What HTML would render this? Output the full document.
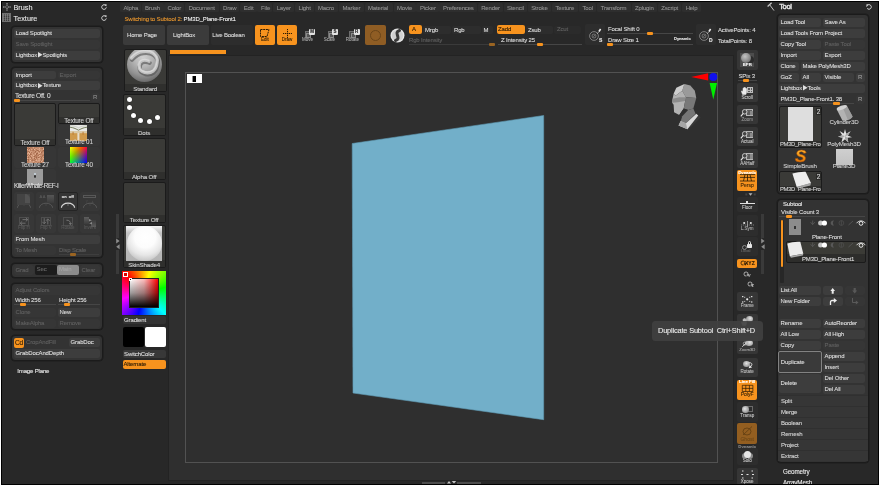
<!DOCTYPE html>
<html><head><meta charset="utf-8"><title>ZBrush</title>
<style>
html,body{margin:0;padding:0;background:#fff;}
body{width:880px;height:486px;overflow:hidden;position:relative;font-family:"Liberation Sans",sans-serif;font-size:6px;letter-spacing:-0.15px;color:#d2d2d2;-webkit-text-stroke:0.1px;}
div{position:absolute;box-sizing:border-box;white-space:nowrap;}
svg{position:absolute;overflow:visible;}
#fr1{left:0;top:0;width:880px;height:486px;border:1px solid #fff;}
#fr2{left:1px;top:1px;width:878px;height:484px;border:1px solid #000;}
#root{left:0;top:0;width:880px;height:486px;overflow:hidden;}
#ui{left:0;top:0;width:880px;height:486px;will-change:transform;}
#app{left:2px;top:2px;width:876px;height:482px;background:#282828;}
.p{background:#333;border:1px solid #1b1b1b;border-radius:4px;box-shadow:0 0 0 0.6px #1d1d1d;}
.b{background:#3d3d3d;border-radius:2px;padding-left:1.6px;color:#dedede;}
.d{background:#363636;border-radius:2px;padding-left:1.6px;color:#606060;}
.o{background:#f7931e;border-radius:2px;padding-left:1px;color:#2a1a05;}
.t{color:#dedede;}
.g{color:#606060;}
.h{font-size:7.3px;color:#e6e6e6;letter-spacing:0;}
.trk{background:#464646;}
.kn{background:#f7931e;border-radius:1px;}
.kd{background:#9a6422;}
.th{background:#3a3a37;border:1px solid #1b1b1b;border-radius:2px;}
.lb{text-align:center;color:#d0d0d0;}
.m{background:#2e2e2e;border-radius:1.5px;}
.ib{background:#363636;border-radius:2px;}
.ik{background:#2d2d2d;border-radius:2px;}
.tri{position:static;display:inline-block;vertical-align:-0.6px;margin:0 0.2px 0 0.5px;}
.s{font-size:4.5px;text-align:center;letter-spacing:0;}
</style></head>
<body>
<div id="root">
<div id="app"></div>
<div id="ui">
<div class="h" style="left:13.5px;top:1.5px;line-height:11px;">Brush</div>
<div class="h" style="left:13.5px;top:12.7px;line-height:11px;">Texture</div>
<svg style="left:3.4px;top:2.5px" width="8" height="8" viewBox="0 0 8 8"><path d="M4 0v3M4 5v3M0 4h3M5 4h3" stroke="#c4c4c4" stroke-width="0.9" stroke-dasharray="1.6 0.6" fill="none"/><circle cx="4" cy="4" r="0.5" fill="#c4c4c4"/></svg>
<div class="" style="left:2.4px;top:13px;width:8.6px;height:9.2px;background:#565656;background-image:repeating-linear-gradient(90deg,rgba(150,150,150,0.55) 0 0.8px,transparent 0.8px 2px),repeating-linear-gradient(0deg,rgba(40,40,40,0.5) 0 0.8px,transparent 0.8px 2.2px);border:0.6px solid #707070;"></div>
<svg style="left:101px;top:4px" width="6" height="6" viewBox="0 0 6 6"><path d="M4.8 1.6A2.3 2.3 0 1 0 5.3 3.4" stroke="#d8d8d8" stroke-width="1" fill="none"/><path d="M3.6 0.2L5.8 0.4L5.2 2.6z" fill="#d8d8d8"/></svg>
<svg style="left:101px;top:15px" width="6" height="6" viewBox="0 0 6 6"><path d="M4.8 1.6A2.3 2.3 0 1 0 5.3 3.4" stroke="#d8d8d8" stroke-width="1" fill="none"/><path d="M3.6 0.2L5.8 0.4L5.2 2.6z" fill="#d8d8d8"/></svg>
<div class="p" style="left:11px;top:26px;width:92px;height:37px;"></div>
<div class="b" style="left:14px;top:29px;width:86px;height:9px;line-height:9px;">Load Spotlight</div>
<div class="d" style="left:14px;top:40px;width:86px;height:9px;line-height:9px;">Save Spotlight</div>
<div class="b" style="left:14px;top:51px;width:86px;height:9px;line-height:9px;">Lightbox<svg class="tri" width="4.6" height="5.4" viewBox="0 0 46 54"><path d="M0 0L46 27L0 54z" fill="#e0e0e0"/></svg>Spotlights</div>
<div class="p" style="left:11px;top:67px;width:92px;height:191px;"></div>
<div class="b" style="left:14px;top:70.5px;width:42px;height:8.8px;line-height:8.8px;">Import</div>
<div class="d" style="left:58px;top:70.5px;width:42px;height:8.8px;line-height:8.8px;">Export</div>
<div class="b" style="left:14px;top:81.4px;width:86px;height:8.6px;line-height:8.6px;">Lightbox<svg class="tri" width="4.6" height="5.4" viewBox="0 0 46 54"><path d="M0 0L46 27L0 54z" fill="#e0e0e0"/></svg>Texture</div>
<div class="t" style="left:15px;top:91.7px;line-height:8px;font-size:6.6px;letter-spacing:-0.3px;">Texture Off. 0</div>
<div class="trk" style="left:14px;top:100px;width:76px;height:1px;"></div>
<div class="kn" style="left:14px;top:99px;width:6px;height:3px;"></div>
<div class="ib" style="left:91px;top:93px;width:9px;height:9px;line-height:9px;color:#8a8a8a;padding-left:2px;">R</div>
<div class="th" style="left:13.7px;top:103px;width:42.5px;height:42.5px;"></div>
<div class="lb" style="left:14.7px;top:138.5px;width:40.5px;height:6px;line-height:7px;background:#30302e;font-size:6.3px;">Texture Off</div>
<div class="th" style="left:57.5px;top:103px;width:42.7px;height:20.7px;"></div>
<div class="lb" style="left:58.5px;top:116.5px;width:40.7px;height:6.2px;line-height:7px;background:#30302e;font-size:6.3px;">Texture Off</div>
<div class="" style="left:57.5px;top:124.5px;width:42.7px;height:21px;background:#363636;border-radius:2px;"></div>
<div class="" style="left:13.7px;top:146.5px;width:42.5px;height:21px;background:#363636;border-radius:2px;"></div>
<div class="" style="left:57.5px;top:146.5px;width:42.7px;height:21px;background:#363636;border-radius:2px;"></div>
<div class="" style="left:13.7px;top:168.5px;width:42.5px;height:21px;background:#363636;border-radius:2px;"></div>
<svg style="left:70.3px;top:124.8px" width="17" height="16" viewBox="0 0 17 16"><rect width="17" height="16" fill="#e9e9e6"/><rect y="7.5" width="17" height="8.5" fill="#cf9a4c"/><rect y="6" width="17" height="2.2" fill="#d9c9a8"/><path d="M0 2.2C4 2.6 6.5 4.2 8.5 5.2C10.5 4.2 13 2.6 17 2.2" stroke="#6a7450" stroke-width="0.9" fill="none"/><path d="M0 0.6C5 1 7 2 8.5 2.8C10 2 12 1 17 0.6" stroke="#b9bdb0" stroke-width="0.6" fill="none"/><rect x="7.4" y="8" width="2" height="7" fill="#e6dccb"/><rect x="2.6" y="6.8" width="0.9" height="3" fill="#b9772e"/><rect x="12.6" y="6.8" width="0.9" height="3" fill="#b9772e"/></svg>
<div class="lb" style="left:57.5px;top:138.2px;width:42.7px;line-height:7px;font-size:6.3px;">Texture 01</div>
<svg style="left:26.7px;top:146.9px" width="16.5" height="16" viewBox="0 0 33 32"><defs><filter id="nz" x="0" y="0" width="100%" height="100%" color-interpolation-filters="sRGB"><feTurbulence type="fractalNoise" baseFrequency="0.7" numOctaves="2" seed="4"/><feColorMatrix type="matrix" values="0.6 0 0 0 0.47  0.7 0 0 0 0.2  0.7 0 0 0 0.08  0 0 0 0 1"/></filter></defs><rect width="33" height="32" fill="#c39b80"/><rect width="33" height="32" filter="url(#nz)"/></svg>
<div class="lb" style="left:13.7px;top:160.5px;width:42.5px;line-height:7px;font-size:6.3px;">Texture 27</div>
<div class="" style="left:70.3px;top:146.9px;width:17px;height:16px;background:linear-gradient(to bottom right,#000 35%,#00f 100%),linear-gradient(to right,#0f0,#000),linear-gradient(to bottom,#f00,#000);background-blend-mode:screen,screen,normal;"></div>
<div class="lb" style="left:57.5px;top:160.5px;width:42.7px;line-height:7px;font-size:6.3px;">Texture 40</div>
<div class="" style="left:26.7px;top:169px;width:16.5px;height:16px;background:#9c9c9c;"></div>
<div class="" style="left:33.8px;top:174.5px;width:2.6px;height:3.6px;background:#2c2c2c;border-radius:50%;"></div>
<div class="" style="left:34.3px;top:173px;width:1.6px;height:1.6px;background:#c8d4dc;border-radius:50%;"></div>
<div class="t" style="left:14px;top:182.2px;line-height:7px;font-size:6.3px;letter-spacing:-0.35px;">KillerWhale-REF-I</div>
<div class="" style="left:14px;top:191.6px;width:19.7px;height:19.6px;background:#373737;border-radius:2px;"></div>
<div class="" style="left:14px;top:213.6px;width:19.7px;height:19.4px;background:#373737;border-radius:2px;"></div>
<div class="" style="left:36px;top:191.6px;width:19.9px;height:19.6px;background:#373737;border-radius:2px;"></div>
<div class="" style="left:36px;top:213.6px;width:19.9px;height:19.4px;background:#373737;border-radius:2px;"></div>
<div class="" style="left:57.8px;top:191.6px;width:20px;height:19.6px;background:#373737;border-radius:2px;border:1px solid #242424;background:#353535;"></div>
<div class="" style="left:57.8px;top:213.6px;width:20px;height:19.4px;background:#373737;border-radius:2px;"></div>
<div class="" style="left:80px;top:191.6px;width:20px;height:19.6px;background:#373737;border-radius:2px;"></div>
<div class="" style="left:80px;top:213.6px;width:20px;height:19.4px;background:#373737;border-radius:2px;"></div>
<svg style="left:17px;top:203px" width="14" height="5" viewBox="0 0 14 5"><path d="M0.4 4.8A6.6 4.6 0 0 1 13.6 4.8" stroke="#5a5a5a" stroke-width="0.9" fill="none"/><path d="M7 1.4V2.6" stroke="#5a5a5a" stroke-width="0.6"/></svg>
<svg style="left:39px;top:203px" width="14" height="5" viewBox="0 0 14 5"><path d="M0.4 4.8A6.6 4.6 0 0 1 13.6 4.8" stroke="#5a5a5a" stroke-width="0.9" fill="none"/><path d="M7 1.4V2.6" stroke="#5a5a5a" stroke-width="0.6"/></svg>
<svg style="left:60.8px;top:203px" width="14" height="5" viewBox="0 0 14 5"><path d="M0.4 4.8A6.6 4.6 0 0 1 13.6 4.8" stroke="#d8d8d8" stroke-width="1.2" fill="none"/><path d="M7 1.4V2.6" stroke="#d8d8d8" stroke-width="0.6"/></svg>
<svg style="left:83px;top:203px" width="14" height="5" viewBox="0 0 14 5"><path d="M0.4 4.8A6.6 4.6 0 0 1 13.6 4.8" stroke="#5a5a5a" stroke-width="0.9" fill="none"/><path d="M7 1.4V2.6" stroke="#5a5a5a" stroke-width="0.6"/></svg>
<div class="" style="left:17px;top:194.4px;width:13.3px;height:11px;background:#434343;"></div>
<div class="" style="left:24.5px;top:194.4px;width:5.8px;height:9px;background:#525252;border-radius:0 6px 0 0;"></div>
<div class="" style="left:47px;top:195px;width:7px;height:8px;background:linear-gradient(to bottom,#565656,#3c3c3c);"></div>
<div class="s" style="left:39.5px;top:194px;color:#5a5a5a;font-size:4px;line-height:5px;">A A</div>
<div class="s" style="left:57.8px;top:193.6px;width:20px;color:#e4e4e4;font-weight:bold;font-size:4px;line-height:5px;">on&nbsp; off</div>
<div class="" style="left:83.2px;top:194.6px;width:12.8px;height:3px;border:0.7px solid #585858;"></div>
<div class="s" style="left:80px;top:198.5px;width:20px;color:#484848;font-size:4px;line-height:5px;">Y&nbsp;&nbsp;&#9650;</div>
<div class="" style="left:19px;top:217px;width:9.8px;height:9px;border:0.8px solid #4e4e4e;"></div>
<div class="s" style="left:14px;top:225px;width:19.7px;color:#585858;line-height:6px;">Flip H</div>
<div class="" style="left:41px;top:217px;width:9.8px;height:9px;border:0.8px solid #4e4e4e;"></div>
<div class="s" style="left:36px;top:225px;width:19.9px;color:#585858;line-height:6px;">Flip V</div>
<div class="" style="left:62.8px;top:217px;width:9.8px;height:9px;border:0.8px solid #4e4e4e;"></div>
<div class="s" style="left:57.8px;top:225px;width:20px;color:#585858;line-height:6px;">Rotate</div>
<div class="s" style="left:80px;top:225px;width:20px;color:#585858;line-height:6px;">Invers</div>
<svg style="left:19px;top:217px" width="10" height="9" viewBox="0 0 10 9"><path d="M3.5 2.6H8.6M6.8 0.8L8.8 2.6L6.8 4.4M6.5 6.2H1.4M3.2 4.4L1.2 6.2L3.2 8" stroke="#747474" stroke-width="0.9" fill="none"/></svg>
<svg style="left:41px;top:217px" width="10" height="9" viewBox="0 0 10 9"><path d="M3.2 1.2V6.6M1.4 4.8L3.2 6.8L5 4.8M6.8 7.4V2M5 3.8L6.8 1.8L8.6 3.8" stroke="#747474" stroke-width="0.9" fill="none"/></svg>
<svg style="left:62.8px;top:217px" width="10" height="9" viewBox="0 0 10 9"><path d="M3.4 3.2C6.2 3 7.6 4.6 7.4 7" stroke="#747474" stroke-width="1" fill="none"/><path d="M5.8 6L7.4 8.2L9 6z" fill="#747474"/></svg>
<div class="" style="left:84.3px;top:217.4px;width:4.6px;height:7px;background:linear-gradient(to bottom,#5e5e5e,#3c3c3c);"></div>
<div class="" style="left:91px;top:219.6px;width:4.6px;height:7px;background:linear-gradient(to bottom,#3c3c3c,#5e5e5e);"></div>
<svg style="left:88.6px;top:219.4px" width="3" height="5.6" viewBox="0 0 30 56"><path d="M0 0L28 12L0 24zM30 30L2 43L30 56z" fill="#8a8a8a"/></svg>
<div class="b" style="left:14px;top:235px;width:86px;height:9px;line-height:9px;">From Mesh</div>
<div class="d" style="left:14px;top:246px;width:42px;height:9px;line-height:9px;">To Mesh</div>
<div class="g" style="left:59px;top:246px;line-height:8px;">Disp Scale</div>
<div class="trk" style="left:59px;top:254px;width:40px;height:1px;background:#3e3e3e;"></div>
<div class="kn kd" style="left:70px;top:253px;width:6px;height:3px;"></div>
<div class="" style="left:116px;top:214px;width:3px;height:24px;background:#3a3a3a;"></div>
<div class="" style="left:116px;top:250px;width:3px;height:24px;background:#3a3a3a;"></div>
<svg style="left:116px;top:238px" width="4" height="12" viewBox="0 0 4 12"><path d="M0.2 0.5L3.6 3L0.2 5.5z" fill="#8c8c8c"/><path d="M3.6 6.3L0.2 8.8L3.6 11.3z" fill="#8c8c8c"/></svg>
<div class="p" style="left:11px;top:263px;width:92px;height:15px;"></div>
<div class="d" style="left:14px;top:265px;width:20px;height:10px;line-height:10px;">Grad</div>
<div class="d" style="left:35px;top:265px;width:22px;height:10px;line-height:10px;background:#1c1c1c;color:#666;line-height:8px;">Sec</div>
<div class="d" style="left:57px;top:265px;width:22px;height:10px;line-height:10px;background:#8c8c8c;color:#a4a4a4;line-height:8px;padding-left:2px;">Main</div>
<div class="d" style="left:80px;top:265px;width:20px;height:10px;line-height:10px;">Clear</div>
<div class="p" style="left:11px;top:283px;width:92px;height:47px;"></div>
<div class="d" style="left:14px;top:286px;width:86px;height:9px;line-height:9px;">Adjust Colors</div>
<div class="t" style="left:15px;top:296.3px;line-height:8px;">Width 256</div>
<div class="trk" style="left:14px;top:304.3px;width:42px;height:1px;"></div>
<div class="kn" style="left:20px;top:303.3px;width:6px;height:3px;"></div>
<div class="t" style="left:59px;top:296.3px;line-height:8px;">Height 256</div>
<div class="trk" style="left:58px;top:304.3px;width:42px;height:1px;"></div>
<div class="kn" style="left:64px;top:303.3px;width:6px;height:3px;"></div>
<div class="d" style="left:14px;top:308px;width:42px;height:9px;line-height:9px;">Clone</div>
<div class="b" style="left:58px;top:308px;width:42px;height:9px;line-height:9px;">New</div>
<div class="d" style="left:14px;top:319px;width:42px;height:9px;line-height:9px;">MakeAlpha</div>
<div class="d" style="left:58px;top:319px;width:42px;height:9px;line-height:9px;">Remove</div>
<div class="p" style="left:11px;top:335px;width:92px;height:26px;"></div>
<div class="o" style="left:14px;top:338px;width:9.5px;height:9.5px;line-height:9.5px;padding-left:1px;font-size:6.6px;letter-spacing:-0.3px;">Cd</div>
<div class="g" style="left:26px;top:338px;line-height:9px;">CropAndFill</div>
<div class="b" style="left:69px;top:338px;width:31px;height:9px;line-height:9px;">GrabDoc</div>
<div class="b" style="left:14px;top:349px;width:86px;height:9px;line-height:9px;">GrabDocAndDepth</div>
<div class="t" style="left:17.3px;top:366px;line-height:9px;color:#e8e8e8;font-size:6.1px;letter-spacing:-0.2px;">Image Plane</div>
<div class="m" style="left:120.3px;top:3.4px;width:20.8px;height:8.8px;"></div>
<div class="" style="left:123.5px;top:4.1px;line-height:8.8px;color:#909090;">Alpha</div>
<div class="m" style="left:141.9px;top:3.4px;width:21.7px;height:8.8px;"></div>
<div class="" style="left:145px;top:4.1px;line-height:8.8px;color:#909090;">Brush</div>
<div class="m" style="left:164.4px;top:3.4px;width:20.0px;height:8.8px;"></div>
<div class="" style="left:167.5px;top:4.1px;line-height:8.8px;color:#909090;">Color</div>
<div class="m" style="left:185.2px;top:3.4px;width:33.6px;height:8.8px;"></div>
<div class="" style="left:188.7px;top:4.1px;line-height:8.8px;color:#909090;">Document</div>
<div class="m" style="left:219.7px;top:3.4px;width:19.8px;height:8.8px;"></div>
<div class="" style="left:223px;top:4.1px;line-height:8.8px;color:#909090;">Draw</div>
<div class="m" style="left:240.2px;top:3.4px;width:16.4px;height:8.8px;"></div>
<div class="" style="left:243.7px;top:4.1px;line-height:8.8px;color:#909090;">Edit</div>
<div class="m" style="left:257.4px;top:3.4px;width:15.1px;height:8.8px;"></div>
<div class="" style="left:261px;top:4.1px;line-height:8.8px;color:#909090;">File</div>
<div class="m" style="left:273.2px;top:3.4px;width:20.9px;height:8.8px;"></div>
<div class="" style="left:276.7px;top:4.1px;line-height:8.8px;color:#909090;">Layer</div>
<div class="m" style="left:294.9px;top:3.4px;width:19.0px;height:8.8px;"></div>
<div class="" style="left:298.5px;top:4.1px;line-height:8.8px;color:#909090;">Light</div>
<div class="m" style="left:314.6px;top:3.4px;width:23.2px;height:8.8px;"></div>
<div class="" style="left:318px;top:4.1px;line-height:8.8px;color:#909090;">Macro</div>
<div class="m" style="left:338.6px;top:3.4px;width:25.2px;height:8.8px;"></div>
<div class="" style="left:342.5px;top:4.1px;line-height:8.8px;color:#909090;">Marker</div>
<div class="m" style="left:364.6px;top:3.4px;width:28.2px;height:8.8px;"></div>
<div class="" style="left:368px;top:4.1px;line-height:8.8px;color:#909090;">Material</div>
<div class="m" style="left:393.6px;top:3.4px;width:22.0px;height:8.8px;"></div>
<div class="" style="left:397px;top:4.1px;line-height:8.8px;color:#909090;">Movie</div>
<div class="m" style="left:416.4px;top:3.4px;width:22.2px;height:8.8px;"></div>
<div class="" style="left:420px;top:4.1px;line-height:8.8px;color:#909090;">Picker</div>
<div class="m" style="left:439.4px;top:3.4px;width:37.7px;height:8.8px;"></div>
<div class="" style="left:443px;top:4.1px;line-height:8.8px;color:#909090;">Preferences</div>
<div class="m" style="left:477.8px;top:3.4px;width:25.0px;height:8.8px;"></div>
<div class="" style="left:481.2px;top:4.1px;line-height:8.8px;color:#909090;">Render</div>
<div class="m" style="left:503.6px;top:3.4px;width:23.4px;height:8.8px;"></div>
<div class="" style="left:507px;top:4.1px;line-height:8.8px;color:#909090;">Stencil</div>
<div class="m" style="left:527.9px;top:3.4px;width:23.0px;height:8.8px;"></div>
<div class="" style="left:531.2px;top:4.1px;line-height:8.8px;color:#909090;">Stroke</div>
<div class="m" style="left:551.6px;top:3.4px;width:26.5px;height:8.8px;"></div>
<div class="" style="left:555.5px;top:4.1px;line-height:8.8px;color:#909090;">Texture</div>
<div class="m" style="left:578.9px;top:3.4px;width:17.6px;height:8.8px;"></div>
<div class="" style="left:582.5px;top:4.1px;line-height:8.8px;color:#909090;">Tool</div>
<div class="m" style="left:597.2px;top:3.4px;width:33.6px;height:8.8px;"></div>
<div class="" style="left:600.7px;top:4.1px;line-height:8.8px;color:#909090;">Transform</div>
<div class="m" style="left:631.6px;top:3.4px;width:25.4px;height:8.8px;"></div>
<div class="" style="left:635px;top:4.1px;line-height:8.8px;color:#909090;">Zplugin</div>
<div class="m" style="left:657.9px;top:3.4px;width:23.6px;height:8.8px;"></div>
<div class="" style="left:661.2px;top:4.1px;line-height:8.8px;color:#909090;">Zscript</div>
<div class="m" style="left:682.2px;top:3.4px;width:18.5px;height:8.8px;"></div>
<div class="" style="left:685.7px;top:4.1px;line-height:8.8px;color:#909090;">Help</div>
<div class="t" style="left:124.5px;top:14.6px;line-height:9px;color:#f0f0f0;"><span style="color:#e8962e">Switching to Subtool 2:</span> PM3D_Plane-Front1</div>
<div class="b" style="left:123px;top:25px;width:42px;height:20px;line-height:20px;padding-left:4px;background:#3b3b3b;letter-spacing:-0.2px;">Home Page</div>
<div class="b" style="left:167px;top:25px;width:42px;height:20px;line-height:20px;padding-left:6px;background:#3b3b3b;">LightBox</div>
<div class="b" style="left:210.7px;top:25px;width:42px;height:20px;line-height:20px;padding-left:1.6px;background:#2d2d2d;letter-spacing:-0.2px;">Live Boolean</div>
<div class="o" style="left:255px;top:25px;width:20px;height:20px;"></div>
<div class="o" style="left:277px;top:25px;width:20px;height:20px;"></div>
<div class="s" style="left:255px;top:37px;width:20px;color:#3a2408;">Edit</div>
<div class="s" style="left:277px;top:37px;width:20px;color:#3a2408;">Draw</div>
<svg style="left:260px;top:29px" width="10" height="8" viewBox="0 0 10 8"><path d="M0.5 0.5H9L7 7.5H0.5z" stroke="#2a1a05" stroke-width="1" stroke-dasharray="2 0.7" fill="none"/></svg>
<svg style="left:282.5px;top:29px" width="9" height="9" viewBox="0 0 9 9"><path d="M4.5 0v3.2M4.5 5.8v3.2M0 4.5h3.2M5.8 4.5h3.2" stroke="#2a1a05" stroke-width="1" stroke-dasharray="1.2 0.8" fill="none"/><circle cx="4.5" cy="4.5" r="0.8" fill="#2a1a05"/></svg>
<div class="" style="left:304.5px;top:31px;width:6px;height:7px;border:1px solid #6e6e6e;background:#484848;"></div>
<div class="" style="left:306.0px;top:32.5px;width:5px;height:5px;border:1px solid #8a8a8a;background:#555;"></div>
<div class="" style="left:309.0px;top:29px;width:6px;height:6px;background:#e2e2e2;border-radius:1px;"></div>
<div class="s" style="left:309.0px;top:29px;width:6px;color:#222;font-weight:bold;line-height:6px;">M</div>
<div class="s" style="left:299px;top:37px;width:17px;color:#a4a4a4;">Move</div>
<div class="" style="left:327.5px;top:31px;width:6px;height:7px;border:1px solid #6e6e6e;background:#484848;"></div>
<div class="" style="left:329.0px;top:32.5px;width:5px;height:5px;border:1px solid #8a8a8a;background:#555;"></div>
<div class="" style="left:332.0px;top:29px;width:6px;height:6px;background:#e2e2e2;border-radius:1px;"></div>
<div class="s" style="left:332.0px;top:29px;width:6px;color:#222;font-weight:bold;line-height:6px;">S</div>
<div class="s" style="left:321px;top:37px;width:17px;color:#a4a4a4;">Scale</div>
<div class="" style="left:349px;top:31px;width:6px;height:7px;border:1px solid #6e6e6e;background:#484848;"></div>
<div class="" style="left:350.5px;top:32.5px;width:5px;height:5px;border:1px solid #8a8a8a;background:#555;"></div>
<div class="" style="left:353.5px;top:29px;width:6px;height:6px;background:#e2e2e2;border-radius:1px;"></div>
<div class="s" style="left:353.5px;top:29px;width:6px;color:#222;font-weight:bold;line-height:6px;">R</div>
<div class="s" style="left:344px;top:37px;width:17px;color:#a4a4a4;">Rotate</div>
<div class="" style="left:364.5px;top:25px;width:21px;height:20px;background:#8f5d24;border-radius:2px;"></div>
<div class="" style="left:369.5px;top:29.5px;width:11px;height:11px;border:1px solid #6a4519;border-radius:50%;"></div>
<svg style="left:389.5px;top:27.5px" width="15" height="15" viewBox="-7.5 -7.5 15 15"><circle r="7" fill="#e4e4e4"/><circle r="5.6" fill="#d0d0d0"/><path d="M2 -5C-4.5 -3 4.5 3 -2 5" stroke="#3a3a3a" stroke-width="3" fill="none" stroke-linecap="round"/></svg>
<div class="o" style="left:409px;top:25px;width:13px;height:9px;line-height:9px;padding-left:3px;">A</div>
<div class="" style="left:423px;top:26px;width:28px;height:8px;background:#2d2d2d;border-radius:2px;"></div>
<div class="" style="left:452px;top:26px;width:29px;height:8px;background:#2d2d2d;border-radius:2px;"></div>
<div class="" style="left:482px;top:26px;width:11px;height:8px;background:#2d2d2d;border-radius:2px;"></div>
<div class="" style="left:526px;top:26px;width:27px;height:8px;background:#2d2d2d;border-radius:2px;"></div>
<div class="" style="left:554px;top:26px;width:27px;height:8px;background:#2b2b2b;border-radius:2px;"></div>
<div class="t" style="left:425px;top:25.5px;line-height:8px;">Mrgb</div>
<div class="t" style="left:454px;top:25.5px;line-height:8px;">Rgb</div>
<div class="t" style="left:483.5px;top:25.5px;line-height:8px;">M</div>
<div class="o" style="left:497px;top:25px;width:28px;height:9px;line-height:9px;">Zadd</div>
<div class="t" style="left:528px;top:26px;line-height:8px;">Zsub</div>
<div class="g" style="left:557px;top:25px;line-height:8px;">Zcut</div>
<div class="g" style="left:409px;top:36px;line-height:8px;">Rgb Intensity</div>
<div class="trk" style="left:409px;top:44px;width:86px;height:1px;background:#3a3a3a;"></div>
<div class="kn kd" style="left:489px;top:43px;width:6px;height:3px;"></div>
<div class="t" style="left:501px;top:36px;line-height:8px;">Z Intensity 25</div>
<div class="trk" style="left:498px;top:44px;width:84px;height:1px;"></div>
<div class="kn" style="left:537px;top:43px;width:6px;height:3px;"></div>
<div class="ib" style="left:585px;top:24px;width:20px;height:21px;background:#2d2d2d;"></div>
<svg style="left:588px;top:28px" width="15" height="15" viewBox="0 0 15 15"><circle cx="6" cy="8" r="4.4" stroke="#a0a0a0" stroke-width="0.7" fill="none"/><circle cx="6" cy="8" r="2" stroke="#a0a0a0" stroke-width="0.6" fill="none"/><path d="M6.8 7L5.4 8.8" stroke="#a0a0a0" stroke-width="0.6"/><path d="M9 6L11 3.5" stroke="#bbb" stroke-width="0.8"/><path d="M11 3.5L12.6 1" stroke="#f0f0f0" stroke-width="1.6"/></svg>
<div class="s" style="left:599px;top:37px;color:#e8e8e8;font-weight:bold;font-size:5px;">S</div>
<div class="t" style="left:608px;top:24.5px;line-height:8px;">Focal Shift 0</div>
<div class="trk" style="left:607px;top:33px;width:86px;height:1px;"></div>
<div class="kn" style="left:647px;top:32px;width:6px;height:3px;"></div>
<div class="t" style="left:608px;top:35.5px;line-height:8px;">Draw Size 1</div>
<div class="trk" style="left:607px;top:44px;width:86px;height:1px;"></div>
<div class="kn" style="left:607px;top:43px;width:6px;height:3px;"></div>
<div class="s" style="left:674px;top:36px;color:#e8e8e8;font-weight:bold;font-size:4px;line-height:6px;">Dynamic</div>
<div class="ib" style="left:696px;top:24px;width:20px;height:21px;background:#2d2d2d;"></div>
<svg style="left:698px;top:28px" width="15" height="15" viewBox="0 0 15 15"><circle cx="6" cy="8" r="4.4" stroke="#a0a0a0" stroke-width="0.7" fill="none"/><circle cx="6" cy="8" r="2" stroke="#a0a0a0" stroke-width="0.6" fill="none"/><path d="M6.8 7L5.4 8.8" stroke="#a0a0a0" stroke-width="0.6"/><path d="M9 6L11 3.5" stroke="#bbb" stroke-width="0.8"/><path d="M11 3.5L12.6 1" stroke="#f0f0f0" stroke-width="1.6"/></svg>
<div class="s" style="left:709px;top:37px;color:#e8e8e8;font-weight:bold;font-size:5px;">D</div>
<div class="t" style="left:718px;top:25.5px;line-height:8px;">ActivePoints: 4</div>
<div class="t" style="left:718px;top:36.5px;line-height:8px;">TotalPoints: 8</div>
<div class="th" style="left:123.8px;top:49.3px;width:42.8px;height:42.3px;"></div>
<div class="lb" style="left:124.8px;top:83.6px;width:40.8px;height:7px;line-height:9px;background:#2f2f2d;font-size:6.2px;">Standard</div>
<div class="th" style="left:122.6px;top:93.8px;width:43px;height:42px;"></div>
<div class="lb" style="left:123.6px;top:127.80000000000001px;width:41px;height:7px;line-height:9px;background:#2f2f2d;font-size:6.2px;">Dots</div>
<div class="th" style="left:122.6px;top:137.6px;width:43px;height:42px;"></div>
<div class="lb" style="left:123.6px;top:171.6px;width:41px;height:7px;line-height:9px;background:#2f2f2d;font-size:6.2px;">Alpha Off</div>
<div class="th" style="left:122.6px;top:181.8px;width:43px;height:41.3px;"></div>
<div class="lb" style="left:123.6px;top:215.10000000000002px;width:41px;height:7px;line-height:9px;background:#2f2f2d;font-size:6.2px;">Texture Off</div>
<div class="th" style="left:122.6px;top:225.1px;width:43px;height:42.7px;"></div>
<div class="lb" style="left:123.6px;top:259.8px;width:41px;height:7px;line-height:9px;background:#2f2f2d;font-size:6.2px;">SkinShade4</div>
<div style="left:124px;top:50px;width:42px;height:34px;overflow:hidden"><div style="left:3px;top:-3px;width:35px;height:35px;border-radius:50%;background:radial-gradient(circle at 46% 30%,#d0d0d0 0,#b8b8b8 28%,#929292 58%,#666 82%,#4a4a4a 100%);"></div><svg style="left:3px;top:-2px" width="35" height="34" viewBox="0 0 35 34"><defs><filter id="bl" x="-20%" y="-20%" width="140%" height="140%"><feGaussianBlur stdDeviation="0.7"/></filter></defs><g fill="none" stroke-linecap="round" filter="url(#bl)"><path d="M4.4 10C8 6 11 4 15.6 3.5C20 3 24 3.5 26.3 5.5C29.5 8 31 11 30 14.5C29.5 18.5 28.5 21 26.3 22.8C23.5 24.8 20.5 25 17.7 24.4C15 23.6 13 22.5 12.4 20.1C11.6 18 12 16 12.9 14.3C14 12.8 16 12 17.7 12.1C19.5 12.2 21 12.5 22 13.2" stroke="#505050" stroke-width="4.4" opacity="0.6" transform="translate(0.6 1.6)"/><path d="M4.4 10C8 6 11 4 15.6 3.5C20 3 24 3.5 26.3 5.5C29.5 8 31 11 30 14.5C29.5 18.5 28.5 21 26.3 22.8C23.5 24.8 20.5 25 17.7 24.4C15 23.6 13 22.5 12.4 20.1C11.6 18 12 16 12.9 14.3C14 12.8 16 12 17.7 12.1C19.5 12.2 21 12.5 22 13.2" stroke="#cacaca" stroke-width="3.4" opacity="0.9"/><path d="M4.4 10C8 6 11 4 15.6 3.5C20 3 24 3.5 26.3 5.5C29.5 8 31 11 30 14.5C29.5 18.5 28.5 21 26.3 22.8C23.5 24.8 20.5 25 17.7 24.4C15 23.6 13 22.5 12.4 20.1C11.6 18 12 16 12.9 14.3C14 12.8 16 12 17.7 12.1C19.5 12.2 21 12.5 22 13.2" stroke="#efefef" stroke-width="1.4" opacity="0.45" transform="translate(-0.2 -0.6)"/></g></svg></div>
<div class="" style="left:126.80000000000001px;top:97.3px;width:5px;height:5px;background:#fff;border-radius:50%;box-shadow:0 0 1px #000;"></div>
<div class="" style="left:126.80000000000001px;top:105.3px;width:5px;height:5px;background:#fff;border-radius:50%;box-shadow:0 0 1px #000;"></div>
<div class="" style="left:130.5px;top:112.5px;width:5px;height:5px;background:#fff;border-radius:50%;box-shadow:0 0 1px #000;"></div>
<div class="" style="left:137.5px;top:117.7px;width:5px;height:5px;background:#fff;border-radius:50%;box-shadow:0 0 1px #000;"></div>
<div class="" style="left:146.7px;top:118.7px;width:5px;height:5px;background:#fff;border-radius:50%;box-shadow:0 0 1px #000;"></div>
<div class="" style="left:154.9px;top:115.1px;width:5px;height:5px;background:#fff;border-radius:50%;box-shadow:0 0 1px #000;"></div>
<div class="" style="left:126px;top:226px;width:36px;height:35px;background:linear-gradient(to bottom,#f4f4f4 0,#c4c4c4 20%,#b4b4b4 100%);"></div>
<div class="" style="left:126.5px;top:225.5px;width:35px;height:35px;border-radius:50%;background:radial-gradient(circle at 52% 32%,#fff 0,#fcfcfc 35%,#e6e6e6 60%,#bdbdbd 85%,#8e8e8e 100%);"></div>
<div class="" style="left:122px;top:271px;width:44px;height:44px;background:conic-gradient(from 315deg at 50% 50%,#f00,#ff0,#0f0,#0ff,#00f,#f0f,#f00);"></div>
<div class="" style="left:129px;top:278px;width:30px;height:30px;background:linear-gradient(to bottom,rgba(0,0,0,0) 0,rgba(0,0,0,0.38) 50%,#000 100%),linear-gradient(to right,#fff 0,#ffbcbc 50%,#f00 100%);border:1px solid #222;"></div>
<div class="" style="left:123px;top:272px;width:5px;height:5px;border:1px solid #fff;background:#d00;"></div>
<div class="" style="left:129px;top:278px;width:3px;height:3px;border:1px solid #fff;background:#000;"></div>
<div class="b" style="left:122.5px;top:316px;width:43px;height:8.4px;line-height:8.4px;background:#333;">Gradient</div>
<div class="" style="left:122.5px;top:327px;width:21px;height:20px;background:#000;border-radius:2px;"></div>
<div class="" style="left:145px;top:327px;width:20.5px;height:20px;background:#fff;border-radius:2px;"></div>
<div class="b" style="left:122.5px;top:349.6px;width:43px;height:8.4px;line-height:8.4px;background:#383838;">SwitchColor</div>
<div class="o" style="left:122.5px;top:360px;width:43px;height:9.3px;line-height:9.3px;">Alternate</div>
<div class="" style="left:170px;top:49.5px;width:55.7px;height:4.2px;background:#f7931e;"></div>
<div class="" style="left:168px;top:55px;width:566px;height:426px;background:#2f2f2f;border:1px solid #232323;"></div>
<div class="" style="left:185px;top:72px;width:533px;height:391px;background:#2f2f2f;border:1px solid #525252;"></div>
<svg style="left:0;top:0" width="880" height="486" viewBox="0 0 880 486"><path d="M352.2 143.5L543.7 115.5L543.7 419.7L353 393z" fill="#72afc9" stroke="#5f9ab4" stroke-width="0.6"/></svg>
<div class="" style="left:186.5px;top:74px;width:15px;height:9px;background:#fff;"></div>
<div class="" style="left:192px;top:75.5px;width:4px;height:6px;background:#000;border-left:1px solid #888;"></div>
<svg style="left:0;top:0" width="880" height="486" viewBox="0 0 880 486"><path d="M691.1 77L708.1 73.2L708.1 80.6z" fill="#f00"/><path d="M709.6 83L717 83L713.3 99.6z" fill="#0e0"/><circle cx="713.3" cy="77" r="4" fill="#11e"/></svg>
<svg style="left:660px;top:64px" width="64" height="72" viewBox="0 0 432 486"><path d="M255 345L275 360L215 420L185 440L200 400z" fill="#383838"/><path d="M165 135L205 145L235 180L245 230L175 225L150 180z" fill="#9a9a9a"/><path d="M110 160L165 135L150 180L105 215L92 200z" fill="#cdcdcd"/><path d="M92 200L105 215L150 180L175 225L160 300L130 345L95 325L92 275L82 262L85 235z" fill="#b2b2b2"/><path d="M85 235L130 225L175 225L170 250L120 258L82 262z" fill="#8c8c8c"/><path d="M175 225L245 230L225 300L190 310L160 300z" fill="#787878"/><path d="M130 345L160 300L190 310L150 352z" fill="#303030"/><path d="M150 352L190 310L225 300L240 335L175 400L140 385z" fill="#767676"/><path d="M140 385L175 400L245 335L258 348L185 440L125 415z" fill="#d8d8d8"/><path d="M140 385L175 400L185 440L125 415z" fill="#a6a6a6"/></svg>
<div class="" style="left:422px;top:482px;width:23px;height:1.8px;background:#4c4c4c;"></div>
<div class="" style="left:457.4px;top:482px;width:23.6px;height:1.8px;background:#4c4c4c;"></div>
<svg style="left:446.8px;top:481.4px" width="9.2" height="2.6" viewBox="0 0 92 26"><path d="M0 26L20 0L40 26zM48 0L70 26L92 0z" fill="#c4c4c4"/></svg>
<div class="ib" style="left:737px;top:50px;width:20.5px;height:19.5px;"></div>
<div class="" style="left:740px;top:53px;width:14px;height:13.5px;background:#4c4c4c;"></div>
<div class="" style="left:746px;top:56px;width:8px;height:8px;border-radius:50%;background:#2c2c2c;"></div>
<div class="" style="left:740.5px;top:52.5px;width:10px;height:10px;border-radius:50%;background:radial-gradient(circle at 40% 35%,#c4c4c4 0,#909090 50%,#505050 100%);"></div>
<div class="s" style="left:737px;top:61.5px;width:20.5px;line-height:6px;color:#f4f4f4;font-weight:bold;font-size:4.3px;">BPR</div>
<div class="t" style="left:738.5px;top:71.5px;line-height:8px;">SPix 3</div>
<div class="trk" style="left:738px;top:79.6px;width:19px;height:1px;"></div>
<div class="kn" style="left:742.5px;top:78.6px;width:6px;height:3px;"></div>
<div class="ib" style="left:737px;top:83px;width:20.5px;height:19.2px;"></div>
<div class="s" style="left:737px;top:95.2px;width:20.5px;line-height:6px;color:#c4c4c4;">Scroll</div>
<div class="ib" style="left:737px;top:105.2px;width:20.5px;height:19px;"></div>
<div class="s" style="left:737px;top:117.2px;width:20.5px;line-height:6px;color:#8e8e8e;">Zoom</div>
<div class="ib" style="left:737px;top:127.2px;width:20.5px;height:19px;"></div>
<div class="s" style="left:737px;top:139.2px;width:20.5px;line-height:6px;color:#c4c4c4;">Actual</div>
<div class="ib" style="left:737px;top:148.8px;width:20.5px;height:19.2px;"></div>
<div class="s" style="left:737px;top:161.0px;width:20.5px;line-height:6px;color:#c4c4c4;">AAHalf</div>
<div class="" style="left:747.4px;top:87.4px;width:5.2px;height:5.6px;border:0.7px solid #bdbdbd;background:#5a5a5a;"></div>
<div class="" style="left:750px;top:87.4px;width:0.6px;height:5.6px;background:#bdbdbd;"></div>
<div class="" style="left:747.4px;top:90px;width:5.2px;height:0.6px;background:#bdbdbd;"></div>
<svg style="left:741px;top:87px" width="7" height="8" viewBox="0 0 7 8"><path d="M1.6 7.6L0.3 4.2L1.2 3.8L2 5V1.2H2.9V4V0.5H3.8V4V0.8H4.7V4.2V1.6H5.6V5.5L4.8 7.6z" fill="#ececec" stroke="#ececec" stroke-width="0.5" stroke-linejoin="round"/></svg>
<div class="" style="left:746.4px;top:109.2px;width:7px;height:7px;border:0.7px solid #b4b4b4;background:#5c5c5c;"></div>
<div class="" style="left:749.5px;top:110.7px;width:3.2px;height:4.5px;background:#8a8a8a;"></div>
<svg style="left:740px;top:109.2px" width="8" height="8" viewBox="0 0 8 8"><circle cx="4.7" cy="2.8" r="2.3" stroke="#e0e0e0" stroke-width="0.8" fill="#444"/><path d="M3.2 4.4L0.8 7.4" stroke="#e8e8e8" stroke-width="1.1"/></svg>
<div class="" style="left:746.4px;top:131.2px;width:7px;height:7px;border:0.7px solid #b4b4b4;background:#5c5c5c;"></div>
<div class="" style="left:749.5px;top:132.7px;width:3.2px;height:4.5px;background:#8a8a8a;"></div>
<svg style="left:740px;top:131.2px" width="8" height="8" viewBox="0 0 8 8"><circle cx="4.7" cy="2.8" r="2.3" stroke="#e0e0e0" stroke-width="0.8" fill="#444"/><path d="M3.2 4.4L0.8 7.4" stroke="#e8e8e8" stroke-width="1.1"/></svg>
<div class="" style="left:746.4px;top:152.8px;width:7px;height:7px;border:0.7px solid #b4b4b4;background:#5c5c5c;"></div>
<div class="" style="left:749.5px;top:154.3px;width:3.2px;height:4.5px;background:#8a8a8a;"></div>
<svg style="left:740px;top:152.8px" width="8" height="8" viewBox="0 0 8 8"><circle cx="4.7" cy="2.8" r="2.3" stroke="#e0e0e0" stroke-width="0.8" fill="#444"/><path d="M3.2 4.4L0.8 7.4" stroke="#e8e8e8" stroke-width="1.1"/></svg>
<div class="o" style="left:737px;top:170.3px;width:20.3px;height:20.5px;"></div>
<div class="s" style="left:737px;top:169.8px;width:20.3px;line-height:6px;color:#fff;font-weight:bold;font-size:4.3px;">Dynamic</div>
<div class="s" style="left:737px;top:181.5px;width:20.3px;line-height:6px;color:#3a2408;font-size:5px;">Persp</div>
<svg style="left:740px;top:174.4px" width="15" height="8" viewBox="0 0 15 8"><path d="M0 0.6H15M0 3.4H15M0 7H15M5 0.6L3.5 7M10 0.6L11.5 7M7.5 0.6V7" stroke="#2a1a05" stroke-width="0.8" fill="none"/></svg>
<svg style="left:745px;top:193px" width="11" height="3" viewBox="0 0 11 3"><path d="M3.5 0.2H7.5L5.5 2.8z" fill="#b4b4b4"/><rect x="0.3" y="0.4" width="2" height="2" fill="#444"/><rect x="8.7" y="0.4" width="2" height="2" fill="#444"/></svg>
<div class="ik" style="left:737px;top:197px;width:20.5px;height:15px;"></div>
<div class="s" style="left:737px;top:205px;width:20.5px;line-height:6px;color:#c4c4c4;">Floor</div>
<div class="" style="left:740px;top:203px;width:14.5px;height:1px;background:#e0e0e0;"></div>
<div class="" style="left:745.5px;top:200.6px;width:2px;height:3px;background:#e0e0e0;"></div>
<div class="ik" style="left:737px;top:215px;width:20.5px;height:20.5px;"></div>
<div class="s" style="left:737px;top:226px;width:20.5px;line-height:6px;color:#a8a8a8;">L.Sym</div>
<svg style="left:741px;top:221px" width="13" height="6" viewBox="0 0 13 6"><path d="M0 4H13" stroke="#9a9a9a" stroke-width="0.7" stroke-dasharray="1.2 0.8" fill="none"/><path d="M6.5 0V6" stroke="#bbb" stroke-width="0.7"/><circle cx="3.2" cy="2" r="1.1" fill="#e0e0e0"/><circle cx="9.8" cy="2" r="1.1" fill="#e0e0e0"/></svg>
<div class="ik" style="left:737px;top:237px;width:20.5px;height:19px;"></div>
<div class="" style="left:747px;top:244.2px;width:5.4px;height:4px;background:#e6e6e6;border-radius:0.8px;"></div>
<div class="" style="left:748px;top:241.2px;width:3.4px;height:4px;border:0.9px solid #e6e6e6;border-radius:2px 2px 0 0;"></div>
<div class="" style="left:741.8px;top:244.6px;width:5px;height:5px;border:0.7px solid #8a8a8a;border-radius:50%;"></div>
<div class="s" style="left:737px;top:247.5px;width:17px;line-height:6px;color:#6a6a6a;font-size:4px;">Local</div>
<div class="o" style="left:737px;top:258.7px;width:20.3px;height:9px;"></div>
<div class="s" style="left:745px;top:259px;line-height:9px;color:#2a1a05;font-size:5px;font-weight:bold;">XYZ</div>
<svg style="left:740.3px;top:259.6px" width="7" height="7" viewBox="-3 -3 7 7"><path d="M0.6 1.9A2 2 0 1 1 1.9 0.6" stroke="#2a1a05" stroke-width="0.8" fill="none"/><path d="M0.6 0.4L3.2 0.2L2.2 2.8z" fill="#2a1a05"/></svg>
<svg style="left:743.4px;top:270.6px" width="7" height="7" viewBox="-3 -3 7 7"><path d="M0.6 1.9A2 2 0 1 1 1.9 0.6" stroke="#c8c8c8" stroke-width="0.8" fill="none"/><path d="M0.6 0.4L3.2 0.2L2.2 2.8z" fill="#c8c8c8"/></svg>
<div class="s" style="left:748.5px;top:273.5px;line-height:4px;color:#c8c8c8;font-size:3.5px;">Y</div>
<svg style="left:746.6px;top:281px" width="7" height="7" viewBox="-3 -3 7 7"><path d="M0.6 1.9A2 2 0 1 1 1.9 0.6" stroke="#c8c8c8" stroke-width="0.8" fill="none"/><path d="M0.6 0.4L3.2 0.2L2.2 2.8z" fill="#c8c8c8"/></svg>
<div class="s" style="left:751.7px;top:284px;line-height:4px;color:#c8c8c8;font-size:3.5px;">Z</div>
<div class="ib" style="left:737px;top:292.3px;width:20.5px;height:18.7px;"></div>
<div class="s" style="left:737px;top:303.4px;width:20.5px;line-height:6px;color:#bdbdbd;">Frame</div>
<svg style="left:742px;top:296px" width="10.4" height="6.6" viewBox="0 0 104 66"><g fill="#dcdcdc"><rect x="0" y="0" width="14" height="12"/><rect x="90" y="0" width="14" height="12"/><rect x="0" y="54" width="14" height="12"/><rect x="90" y="54" width="14" height="12"/><rect x="22" y="8" width="10" height="9"/><rect x="72" y="8" width="10" height="9"/><rect x="22" y="49" width="10" height="9"/><rect x="72" y="49" width="10" height="9"/><circle cx="52" cy="33" r="11" fill="#f4f4f4"/></g></svg>
<div class="ib" style="left:737px;top:314px;width:20.5px;height:19px;"></div>
<div class="" style="left:746px;top:316px;width:7px;height:6px;background:radial-gradient(circle at 60% 40%,#e4e4e4 0,#9a9a9a 70%,#666 100%);border-radius:50%;"></div>
<svg style="left:741px;top:318px" width="7" height="8" viewBox="0 0 7 8"><path d="M1.6 7.6L0.3 4.2L1.2 3.8L2 5V1.2H2.9V4V0.5H3.8V4V0.8H4.7V4.2V1.6H5.6V5.5L4.8 7.6z" fill="#bdbdbd" stroke="#bdbdbd" stroke-width="0.5" stroke-linejoin="round"/></svg>
<div class="ib" style="left:737px;top:335.5px;width:20.5px;height:18.5px;"></div>
<div class="s" style="left:737px;top:347px;width:20.5px;line-height:6px;color:#a8a8a8;font-size:4.2px;">Zoom3D</div>
<div class="" style="left:745.3px;top:339.5px;width:8px;height:6px;background:radial-gradient(circle at 60% 40%,#e4e4e4 0,#9a9a9a 70%,#666 100%);border-radius:50%;"></div>
<svg style="left:740.5px;top:341.5px" width="6" height="6" viewBox="0 0 6 6"><path d="M5.6 0.6L1.2 4.8" stroke="#d8d8d8" stroke-width="0.9"/><circle cx="3.8" cy="1.6" r="1.5" stroke="#d8d8d8" stroke-width="0.6" fill="none"/></svg>
<div class="ib" style="left:737px;top:357.8px;width:20.5px;height:19px;"></div>
<div class="s" style="left:737px;top:369.2px;width:20.5px;line-height:6px;color:#bdbdbd;">Rotate</div>
<div class="" style="left:742.8px;top:360.8px;width:7px;height:6.4px;background:radial-gradient(circle at 50% 40%,#e4e4e4 0,#9a9a9a 70%,#666 100%);border-radius:50%;"></div>
<svg style="left:743px;top:361.6px" width="11" height="7" viewBox="0 0 11 7"><path d="M5.5 0.8C8.6 0.2 10.2 2.4 7.6 4.6" stroke="#e8e8e8" stroke-width="0.9" fill="none"/><path d="M9 5.6L5.6 6.2L6.8 3z" fill="#e8e8e8"/></svg>
<div class="o" style="left:737px;top:379.7px;width:20.3px;height:20px;"></div>
<div class="s" style="left:737px;top:379.2px;width:20.3px;line-height:6px;color:#fff;font-weight:bold;font-size:4.3px;">Line Fill</div>
<div class="s" style="left:737px;top:391.2px;width:20.3px;line-height:6px;color:#3a2408;font-size:5px;">PolyF</div>
<svg style="left:741.8px;top:384.8px" width="11.2" height="6.8" viewBox="0 0 112 68"><path d="M3 3H109V65H3zM3 34H109M38 3V65M74 3V65" stroke="#2a1a05" stroke-width="7" fill="none"/></svg>
<div class="ik" style="left:737px;top:402.4px;width:20.5px;height:19.4px;"></div>
<div class="s" style="left:737px;top:412.8px;width:20.5px;line-height:6px;color:#c4c4c4;">Transp</div>
<div class="" style="left:746.4px;top:405.6px;width:6.5px;height:6.2px;border:0.7px solid #6a6a6a;"></div>
<div class="" style="left:742.2px;top:406.2px;width:7px;height:6.6px;background:radial-gradient(circle at 40% 40%,#e4e4e4 0,#8a8a8a 80%);border-radius:50%;"></div>
<div class="" style="left:737px;top:423.3px;width:20.3px;height:20.5px;background:#935e20;border-radius:2px;"></div>
<div class="s" style="left:737px;top:435.5px;width:20.3px;line-height:6px;color:#6e4818;font-size:5px;">Ghost</div>
<svg style="left:742px;top:426px" width="11" height="10" viewBox="0 0 11 10"><ellipse cx="5" cy="5.5" rx="4" ry="3.5" stroke="#5e3c12" stroke-width="0.8" fill="none"/><path d="M1 9L10 0.5" stroke="#5e3c12" stroke-width="0.8"/></svg>
<div class="s" style="left:737px;top:444.3px;width:20.5px;line-height:6px;color:#8a8a8a;font-weight:bold;font-size:4.3px;">Dynamic</div>
<div class="ik" style="left:737px;top:448px;width:20.5px;height:17px;"></div>
<div class="s" style="left:737px;top:458px;width:20.5px;line-height:6px;color:#c4c4c4;">Solo</div>
<div class="" style="left:741.5px;top:452.5px;width:6px;height:6px;background:#8a8a8a;border-radius:50%;"></div>
<div class="" style="left:747px;top:452.5px;width:6px;height:6px;background:#8a8a8a;border-radius:50%;"></div>
<div class="" style="left:743.8px;top:450.6px;width:7px;height:7px;background:#e6e6e6;border-radius:50%;"></div>
<div class="ib" style="left:737px;top:467.5px;width:20.5px;height:17px;"></div>
<div class="s" style="left:737px;top:478.5px;width:20.5px;line-height:6px;color:#c4c4c4;">Xpose</div>
<svg style="left:741px;top:470px" width="13" height="9" viewBox="0 0 13 9"><path d="M1 1h1.5M10.5 1h1.5M0 4.5h2M11 4.5h2M1 8h1.5M10.5 8h1.5M5.5 4.5h2" stroke="#e0e0e0" stroke-width="1.2"/></svg>
<div class="" style="left:761px;top:214px;width:3px;height:24px;background:#3a3a3a;"></div>
<div class="" style="left:761px;top:250px;width:3px;height:24px;background:#3a3a3a;"></div>
<svg style="left:760.5px;top:238px" width="4" height="12" viewBox="0 0 4 12"><path d="M0.2 0.5L3.6 3L0.2 5.5z" fill="#8c8c8c"/><path d="M3.6 6.3L0.2 8.8L3.6 11.3z" fill="#8c8c8c"/></svg>
<div class="h" style="left:779.2px;top:1.2px;line-height:11px;font-size:7.5px;letter-spacing:-0.35px;-webkit-text-stroke:0.4px;">Tool</div>
<svg style="left:767px;top:2px" width="8" height="9" viewBox="0 0 8 9"><path d="M0.6 4.4L4.6 0.8" stroke="#c8c8c8" stroke-width="1.3" fill="none"/><path d="M2.4 2.4L7 8.6" stroke="#c0c0c0" stroke-width="1" fill="none"/></svg>
<svg style="left:866px;top:4px" width="6" height="6" viewBox="0 0 6 6"><path d="M1.2 4.4A2.3 2.3 0 1 0 0.7 2.6" stroke="#d8d8d8" stroke-width="1" fill="none"/><path d="M2.4 0.2L0.2 0.4L0.8 2.6z" fill="#d8d8d8"/></svg>
<div class="p" style="left:777px;top:14px;width:92px;height:180px;"></div>
<div class="b" style="left:779px;top:18px;width:42px;height:9px;line-height:9px;">Load Tool</div>
<div class="b" style="left:823px;top:18px;width:42px;height:9px;line-height:9px;">Save As</div>
<div class="b" style="left:779px;top:29px;width:86px;height:9px;line-height:9px;">Load Tools From Project</div>
<div class="b" style="left:779px;top:40px;width:42px;height:9px;line-height:9px;">Copy Tool</div>
<div class="d" style="left:823px;top:40px;width:42px;height:9px;line-height:9px;">Paste Tool</div>
<div class="b" style="left:779px;top:51px;width:42px;height:9px;line-height:9px;">Import</div>
<div class="b" style="left:823px;top:51px;width:42px;height:9px;line-height:9px;">Export</div>
<div class="b" style="left:779px;top:62px;width:20px;height:9px;line-height:9px;">Clone</div>
<div class="b" style="left:801px;top:62px;width:64px;height:9px;line-height:9px;">Make PolyMesh3D</div>
<div class="b" style="left:779px;top:73px;width:20px;height:9px;line-height:9px;">GoZ</div>
<div class="b" style="left:801px;top:73px;width:20px;height:9px;line-height:9px;">All</div>
<div class="b" style="left:823px;top:73px;width:31px;height:9px;line-height:9px;">Visible</div>
<div class="b" style="left:856px;top:73px;width:9px;height:9px;line-height:9px;padding-left:2px;color:#9a9a9a;">R</div>
<div class="b" style="left:779px;top:84px;width:86px;height:9px;line-height:9px;">Lightbox<svg class="tri" width="4.6" height="5.4" viewBox="0 0 46 54"><path d="M0 0L46 27L0 54z" fill="#e0e0e0"/></svg>Tools</div>
<div class="t" style="left:780.5px;top:94.5px;line-height:8px;">PM3D_Plane-Front1. 38</div>
<div class="trk" style="left:779px;top:103px;width:75px;height:1px;"></div>
<div class="kn" style="left:833px;top:102px;width:7px;height:3px;"></div>
<div class="ib" style="left:856px;top:95px;width:9px;height:9px;line-height:9px;padding-left:2px;color:#9a9a9a;">R</div>
<div class="th" style="left:779px;top:105.5px;width:43px;height:42.5px;"></div>
<div class="" style="left:788px;top:106.5px;width:25px;height:34px;background:#dedede;"></div>
<div class="lb" style="left:780px;top:141px;width:41px;height:6px;line-height:6.5px;background:#2f2f2d;overflow:hidden;font-size:5.9px;letter-spacing:-0.36px;text-align:left;">PM3D_Plane-Fro</div>
<div class="" style="left:816.4px;top:107.5px;width:4.4px;height:7px;background:#2a2a28;"></div>
<div class="t" style="left:816.8px;top:107.5px;line-height:7px;font-size:6.5px;">2</div>
<svg style="left:836px;top:105px" width="18" height="17" viewBox="0 0 18 17"><path d="M0.8 4.6L10.8 0.8L16.6 11.6C15 14.6 9.5 16.6 6.4 15.6z" fill="#b2b2b2"/><path d="M10.8 0.8L16.6 11.6C15.6 13.4 13.5 14.6 12 15.2L7.5 4.2z" fill="#949494" opacity="0.7"/><ellipse cx="5.8" cy="2.7" rx="5.4" ry="2" transform="rotate(-20 5.8 2.7)" fill="#d2d2d2"/></svg>
<div class="lb" style="left:823px;top:118.3px;width:42px;line-height:7px;font-size:6.2px;">Cylinder3D</div>
<svg style="left:837.5px;top:128.5px" width="14" height="14" viewBox="0 0 14 14"><path d="M7 0L8.3 4.8L12.6 2.2L9.8 6.4L14 8.2L9.4 8.8L10.4 13.6L7 10.2L3.4 13.4L4.6 8.8L0 7.8L4.2 6.2L1.6 2L5.8 4.6z" fill="#e0e0e0"/><path d="M7 7L8.3 4.8L12.6 2.2L9.8 6.4zM7 7L9.4 8.8L10.4 13.6L7 10.2zM7 7L4.6 8.8L0 7.8L4.2 6.2z" fill="#a8a8a8"/></svg>
<div class="lb" style="left:823px;top:140.3px;width:42px;line-height:7px;font-size:6.2px;">PolyMesh3D</div>
<svg style="left:792px;top:147px" width="17" height="18" viewBox="0 0 17 18"><defs><linearGradient id="sg" x1="0" y1="0" x2="0" y2="1"><stop offset="0" stop-color="#ffc640"/><stop offset="0.5" stop-color="#f39412"/><stop offset="1" stop-color="#d86a06"/></linearGradient></defs><text x="8.5" y="15" text-anchor="middle" font-family="Liberation Sans,sans-serif" font-weight="bold" font-style="italic" font-size="17" fill="url(#sg)" stroke="#b45208" stroke-width="0.5">S</text></svg>
<div class="lb" style="left:779px;top:162.3px;width:42px;line-height:7px;font-size:6.2px;">SimpleBrush</div>
<div class="" style="left:836px;top:149px;width:16.5px;height:16px;background:linear-gradient(#cfcfcf,#c2c2c2);"></div>
<div class="lb" style="left:823px;top:162.3px;width:42px;line-height:7px;font-size:6.2px;">Plane3D</div>
<div class="th" style="left:779px;top:171px;width:43px;height:21px;"></div>
<div class="" style="left:780px;top:185.5px;width:41px;height:5.5px;background:#2f2f2d;"></div>
<svg style="left:779px;top:171px" width="43" height="21" viewBox="0 0 43 21"><path d="M17.7 16L32 12L31.4 14.6L19 17.6z" fill="#a4a4a4"/><path d="M13.4 2.6Q20 0.6 26.6 0.8L32 12L17.7 16z" fill="#ededed"/></svg>
<div class="lb" style="left:780px;top:185.5px;width:41px;height:5.5px;line-height:6px;overflow:hidden;font-size:5.9px;letter-spacing:-0.36px;text-align:left;text-shadow:0 0 1px #222;">PM3D_Plane-Fro</div>
<div class="" style="left:816.4px;top:173px;width:4.4px;height:7px;background:#2a2a28;"></div>
<div class="t" style="left:816.8px;top:173px;line-height:7px;font-size:6.5px;">2</div>
<div class="p" style="left:777px;top:199px;width:92px;height:264px;"></div>
<div class="t" style="left:783px;top:199.5px;line-height:9px;color:#ececec;">Subtool</div>
<div class="t" style="left:781px;top:208px;line-height:8px;">Visible Count 3</div>
<div class="trk" style="left:779px;top:216.4px;width:86px;height:1px;"></div>
<div class="kn" style="left:786px;top:215.4px;width:6.4px;height:3px;"></div>
<div class="" style="left:780.2px;top:220px;width:3.4px;height:63px;background:#272727;border-radius:1px;"></div>
<div class="" style="left:780.6px;top:220.2px;width:2.7px;height:46.6px;background:#f7931e;border-radius:1px;"></div>
<div class="" style="left:789px;top:219px;width:12px;height:16px;background:#8c8c8c;"></div>
<div class="" style="left:794px;top:226px;width:2px;height:3px;background:#333;"></div>
<div class="t" style="left:812px;top:233px;line-height:8px;">Plane-Front</div>
<div class="" style="left:786px;top:241px;width:80px;height:22px;background:#2d2d2b;border:1px solid #1b1b1b;border-radius:2px;"></div>
<div class="" style="left:787px;top:242px;width:78px;height:12px;background:#3b3b36;"></div>
<svg style="left:786px;top:241px" width="18" height="17" viewBox="0 0 18 17"><path d="M1.3 2.4Q7 0.4 14.3 0.8L17.3 12.7L3.8 15.3z" fill="#ececec"/><path d="M3.8 15.3L17.3 12.7L16.8 14.5L5 16.8z" fill="#a8a8a8"/></svg>
<div class="t" style="left:802px;top:255px;line-height:8px;">PM3D_Plane-Front1</div>
<svg style="left:810px;top:220px" width="56" height="6" viewBox="0 0 56 6"><path d="M0.6 2.2L2.6 4.6L4.8 2.2M2.7 0.5V4.5" stroke="#5c5c5c" stroke-width="0.8" fill="none"/><circle cx="10.6" cy="3" r="2.5" fill="#c4c4c4"/><circle cx="14.4" cy="3" r="2.6" fill="#fff"/><path d="M24 0.5A2.6 2.6 0 1 0 24 5.5A3.4 3.4 0 0 1 24 0.5z" fill="#585858"/><circle cx="31.4" cy="3" r="2.4" stroke="#505050" stroke-width="0.7" fill="none"/><path d="M31.4 0.6V5.4" stroke="#505050" stroke-width="0.7"/><path d="M38.5 5L43 1" stroke="#565656" stroke-width="0.9"/><path d="M46.6 3.2C48.6 0.2 53.4 0.2 55.4 3.2" stroke="#e6e6e6" stroke-width="1" fill="none"/><circle cx="51" cy="3.4" r="1.9" stroke="#e6e6e6" stroke-width="1" fill="none"/></svg>
<svg style="left:810px;top:242px" width="56" height="6" viewBox="0 0 56 6"><path d="M0.6 2.2L2.6 4.6L4.8 2.2M2.7 0.5V4.5" stroke="#5c5c5c" stroke-width="0.8" fill="none"/><circle cx="10.6" cy="3" r="2.5" fill="#c4c4c4"/><circle cx="14.4" cy="3" r="2.6" fill="#fff"/><path d="M24 0.5A2.6 2.6 0 1 0 24 5.5A3.4 3.4 0 0 1 24 0.5z" fill="#585858"/><circle cx="31.4" cy="3" r="2.4" stroke="#505050" stroke-width="0.7" fill="none"/><path d="M31.4 0.6V5.4" stroke="#505050" stroke-width="0.7"/><path d="M38.5 5L43 1" stroke="#565656" stroke-width="0.9"/><path d="M46.6 3.2C48.6 0.2 53.4 0.2 55.4 3.2" stroke="#e6e6e6" stroke-width="1" fill="none"/><circle cx="51" cy="3.4" r="1.9" stroke="#e6e6e6" stroke-width="1" fill="none"/></svg>
<div class="b" style="left:779px;top:286px;width:42px;height:9px;line-height:9px;">List All</div>
<div class="b" style="left:823px;top:286px;width:20px;height:9px;"></div>
<div class="d" style="left:845px;top:286px;width:20px;height:9px;"></div>
<div class="b" style="left:779px;top:297px;width:42px;height:9px;line-height:9px;">New Folder</div>
<div class="b" style="left:823px;top:297px;width:20px;height:9px;"></div>
<div class="d" style="left:845px;top:297px;width:20px;height:9px;"></div>
<svg style="left:830.4px;top:287.6px" width="5.4" height="5.8" viewBox="0 0 6 7"><path d="M3 0L5.8 3.6H4.2V7H1.8V3.6H0.2z" fill="#ececec"/></svg>
<svg style="left:852.4px;top:288px" width="5.4" height="5.4" viewBox="0 0 6 6"><path d="M3 6L5.8 2.8H4.2V0H1.8V2.8H0.2z" fill="#585858"/></svg>
<svg style="left:829px;top:298px" width="8" height="7" viewBox="0 0 8 7"><path d="M1.5 7V4A1.5 1.5 0 0 1 3 2.5H5" stroke="#ededed" stroke-width="1.3" fill="none"/><path d="M4.8 0L8 2.5L4.8 5z" fill="#ededed"/></svg>
<svg style="left:851px;top:298px" width="8" height="7" viewBox="0 0 8 7"><path d="M1.5 0V4.5H5" stroke="#5a5a5a" stroke-width="1" fill="none"/><path d="M4.8 2.5L7.5 4.5L4.8 6.5z" fill="#5a5a5a"/></svg>
<div class="b" style="left:779px;top:318.8px;width:42px;height:9px;line-height:9px;">Rename</div>
<div class="b" style="left:823px;top:318.8px;width:42px;height:9px;line-height:9px;">AutoReorder</div>
<div class="b" style="left:779px;top:330px;width:42px;height:9px;line-height:9px;">All Low</div>
<div class="b" style="left:823px;top:330px;width:42px;height:9px;line-height:9px;">All High</div>
<div class="b" style="left:779px;top:341px;width:42px;height:9px;line-height:9px;">Copy</div>
<div class="d" style="left:823px;top:341px;width:42px;height:9px;line-height:9px;">Paste</div>
<div class="b" style="left:778px;top:351px;width:44px;height:22px;line-height:22px;border:1px solid #828282;padding-left:1.8px;line-height:20px;background:#3a3a3a;">Duplicate</div>
<div class="b" style="left:823px;top:352px;width:42px;height:9px;line-height:9px;">Append</div>
<div class="b" style="left:823px;top:363px;width:42px;height:9px;line-height:9px;">Insert</div>
<div class="b" style="left:779px;top:374px;width:42px;height:19px;line-height:19px;">Delete</div>
<div class="b" style="left:823px;top:374px;width:42px;height:9px;line-height:9px;">Del Other</div>
<div class="b" style="left:823px;top:385px;width:42px;height:9px;line-height:9px;">Del All</div>
<div class="" style="left:778px;top:395px;width:90px;height:11px;line-height:11px;padding-left:3px;border-top:1px solid #303030;background:#363636;color:#d6d6d6;">Split</div>
<div class="" style="left:778px;top:406px;width:90px;height:11px;line-height:11px;padding-left:3px;border-top:1px solid #303030;background:#363636;color:#d6d6d6;">Merge</div>
<div class="" style="left:778px;top:417px;width:90px;height:11px;line-height:11px;padding-left:3px;border-top:1px solid #303030;background:#363636;color:#d6d6d6;">Boolean</div>
<div class="" style="left:778px;top:428px;width:90px;height:11px;line-height:11px;padding-left:3px;border-top:1px solid #303030;background:#363636;color:#d6d6d6;">Remesh</div>
<div class="" style="left:778px;top:439px;width:90px;height:11px;line-height:11px;padding-left:3px;border-top:1px solid #303030;background:#363636;color:#d6d6d6;">Project</div>
<div class="" style="left:778px;top:450px;width:90px;height:11px;line-height:11px;padding-left:3px;border-top:1px solid #303030;background:#363636;color:#d6d6d6;">Extract</div>
<div class="t" style="left:783px;top:467px;line-height:9px;color:#ececec;font-size:6.3px;">Geometry</div>
<div class="t" style="left:783px;top:478px;line-height:9px;height:6px;color:#ececec;font-size:6.3px;">ArrayMesh</div>
<div class="" style="left:652px;top:321px;width:111px;height:19.5px;background:rgba(64,64,64,0.9);border-radius:3.5px;line-height:19px;padding-left:6px;font-size:7.4px;letter-spacing:-0.17px;color:#ececec;">Duplicate Subtool&nbsp; Ctrl+Shift+D</div>
</div>
<div id="fr2"></div><div id="fr1"></div>
</div>
</body></html>
